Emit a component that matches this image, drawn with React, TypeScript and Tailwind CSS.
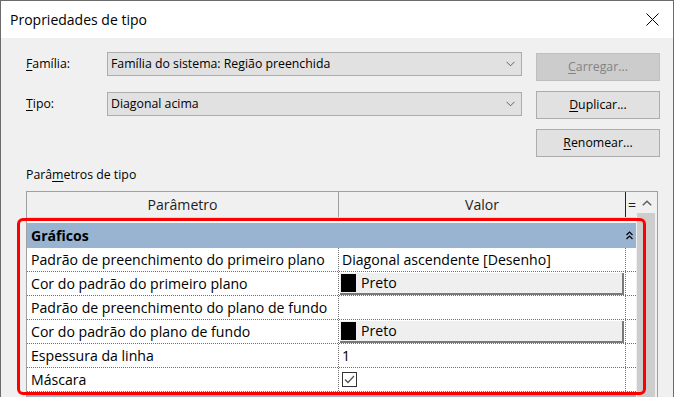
import React from "react";

const FONT = { fontFamily: '"Open Sans", "Noto Sans", sans-serif' };

function Chevron() {
  return (
    <svg width="9" height="6" viewBox="0 0 9 6" className="shrink-0">
      <path d="M0.5 0.8 L4.5 4.8 L8.5 0.8" fill="none" stroke="#606060" strokeWidth="1" />
    </svg>
  );
}

function Select({ value }: { value: string }) {
  return (
    <div className="flex h-[24px] w-[415px] items-center justify-between border border-[#adadad] bg-[#e1e1e1] pl-[3px] pr-[6px] text-[12.3px] text-black">
      <span>{value}</span>
      <Chevron />
    </div>
  );
}

function Btn({ label, mnemonic, disabled }: { label: string; mnemonic: string; disabled?: boolean }) {
  return (
    <div
      className={`flex h-[28px] w-[124px] items-center justify-center border text-[12.3px] ${
        disabled ? "border-[#bfbfbf] bg-[#cccccc] text-[#838383]" : "border-[#adadad] bg-[#e1e1e1] text-black"
      }`}
    >
      <span>
        <span className="underline underline-offset-2">{mnemonic}</span>
        {label}
      </span>
    </div>
  );
}

function ColorCell() {
  return (
    <div className="mx-[1px] flex h-[22px] flex-1 items-center border-b-2 border-r-2 border-[#7a7a7a] bg-[#efefef] pl-[1px]">
      <div className="h-[18px] w-[15px] bg-black" />
      <span className="ml-[5px]">Preto</span>
    </div>
  );
}

function CheckCell() {
  return (
    <div className="ml-[3px] flex h-[15px] w-[15px] items-center justify-center border border-[#333333] bg-white">
      <svg width="11" height="9" viewBox="0 0 11 9">
        <path d="M1 4.5 L4 7.5 L10 1" fill="none" stroke="#555555" strokeWidth="1.3" />
      </svg>
    </div>
  );
}

type Row = { name: string; kind: "text" | "color" | "check"; value?: string };

const rows: Row[] = [
  { name: "Padrão de preenchimento do primeiro plano", kind: "text", value: "Diagonal ascendente [Desenho]" },
  { name: "Cor do padrão do primeiro plano", kind: "color" },
  { name: "Padrão de preenchimento do plano de fundo", kind: "text", value: "" },
  { name: "Cor do padrão do plano de fundo", kind: "color" },
  { name: "Espessura da linha", kind: "text", value: "1" },
  { name: "Máscara", kind: "check" },
];

export default function App() {
  return (
    <div
      style={FONT}
      className="relative h-[397px] w-[674px] overflow-hidden border-l border-r border-t border-[#6b6b6b] bg-[#f0f0f0] text-black"
    >
      {/* title bar */}
      <div className="flex h-[37px] items-center justify-between bg-white pl-[9px] pr-[14px]">
        <span className="text-[14px]">Propriedades de tipo</span>
        <svg width="13" height="13" viewBox="0 0 13 13">
          <path d="M0.5 0.5 L12.5 12.5 M12.5 0.5 L0.5 12.5" stroke="#000" strokeWidth="1" />
        </svg>
      </div>

      <div className="pl-[25px]">
        <div className="flex">
          <div className="mt-[14px] flex flex-col gap-[16px]">
            <div className="flex items-center">
              <span className="w-[81px] text-[12.3px]">
                <span className="underline underline-offset-2">F</span>amília:
              </span>
              <Select value="Família do sistema: Região preenchida" />
            </div>
            <div className="flex items-center">
              <span className="w-[81px] text-[12.3px]">
                <span className="underline underline-offset-2">T</span>ipo:
              </span>
              <Select value="Diagonal acima" />
            </div>
          </div>
          <div className="ml-[14px] mt-[15px] flex flex-col gap-[10px]">
            <Btn mnemonic="C" label="arregar..." disabled />
            <Btn mnemonic="D" label="uplicar..." />
            <Btn mnemonic="R" label="enomear..." />
          </div>
        </div>

        <div className="mt-[9px] h-[18px] text-[12.3px] leading-[18px]">
          Parâ<span className="underline underline-offset-2">m</span>etros de tipo
        </div>

        {/* table */}
        <div className="mt-[7px] flex w-[632px] border-l border-r border-t border-[#a0a0a0] text-[14.1px]">
          <div className="flex w-[609px] flex-col">
            <div className="flex h-[26px] border-b border-[#d9d9d9] bg-[#f0f0f0] text-[#1e1e1e]">
              <div className="flex w-[312px] items-center justify-center border-r border-[#a0a0a0]">Parâmetro</div>
              <div className="flex w-[287px] items-center justify-center border-r border-[#222222]">Valor</div>
              <div className="flex w-[10px] items-center overflow-hidden pl-[2px]">=</div>
            </div>
            <div className="h-[200px] bg-white">
              <div className="mt-[5px] flex h-[25px] items-center justify-between bg-[#99b4d1] pl-[4px] pr-[3px] font-bold">
                <span>Gráficos</span>
                <svg width="7" height="9" viewBox="0 0 7 9">
                  <path d="M0.5 4 L3.5 1 L6.5 4 M0.5 8 L3.5 5 L6.5 8" fill="none" stroke="#000" strokeWidth="1.2" />
                </svg>
              </div>
              {rows.map((r) => (
                <div key={r.name} className="flex h-[24px] border-b border-dotted border-[#707070]">
                  <div className="flex w-[312px] items-center border-r border-dotted border-[#707070] pl-[4px] whitespace-nowrap">
                    {r.name}
                  </div>
                  <div className="flex w-[287px] items-center border-r border-dotted border-[#707070]">
                    {r.kind === "text" && <span className="pl-[3px]">{r.value}</span>}
                    {r.kind === "color" && <ColorCell />}
                    {r.kind === "check" && <CheckCell />}
                  </div>
                  <div className="w-[10px]" />
                </div>
              ))}
              <div className="mt-[3px] h-[25px] bg-[#99b4d1]" />
            </div>
          </div>
          {/* scrollbar */}
          <div className="flex w-[21px] flex-col bg-[#f0f0f0]">
            <div className="flex h-[21px] items-center justify-center">
              <svg width="10" height="6" viewBox="0 0 10 6">
                <path d="M0.8 5.2 L5 1.2 L9.2 5.2" fill="none" stroke="#606060" strokeWidth="1.5" />
              </svg>
            </div>
            <div className="ml-[1px] mr-[2px] flex-1 bg-[#cdcdcd]" />
          </div>
        </div>
      </div>

      {/* annotation frame */}
      <div className="pointer-events-none absolute left-[16px] top-[217px] h-[177px] w-[629px] rounded-[6px] border-[3px] border-[#ff0000]" />
    </div>
  );
}
